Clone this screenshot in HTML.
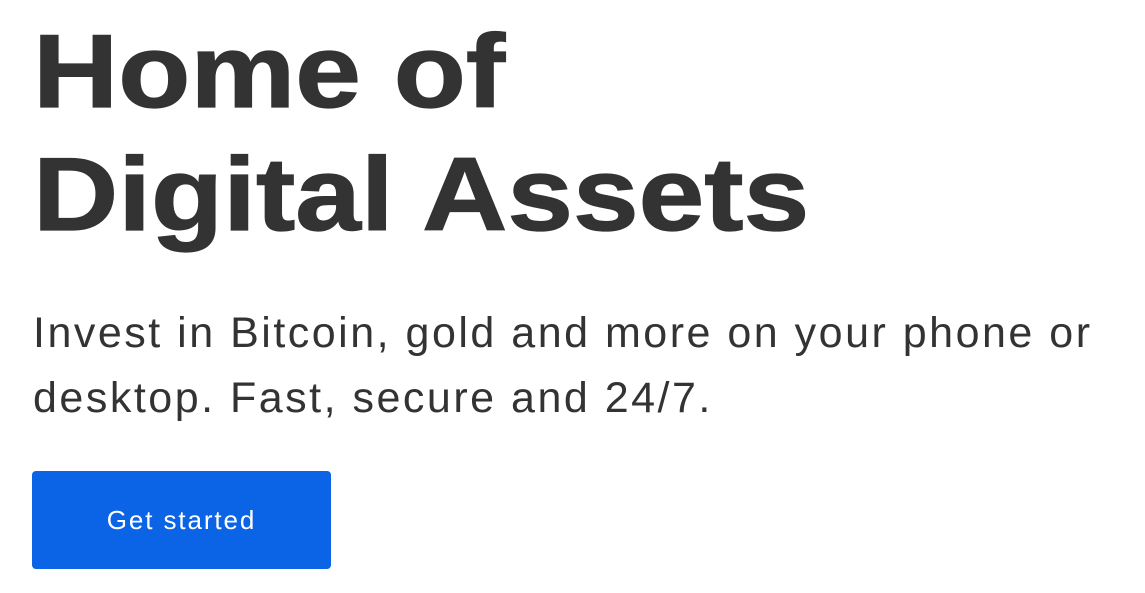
<!DOCTYPE html>
<html><head><meta charset="utf-8"><style>
html,body{margin:0;padding:0;background:#fff;width:1145px;height:593px;overflow:hidden}
body{font-family:"Liberation Sans",sans-serif;color:#333}
h1{position:absolute;left:33px;top:11px;margin:0;font-size:104px;line-height:123px;font-weight:bold;color:#333;letter-spacing:0;transform:scaleX(1.135);transform-origin:0 0;white-space:nowrap;-webkit-text-stroke:1.2px #333}
p{position:absolute;left:33px;top:301px;margin:0;font-size:43px;line-height:65px;color:#333;letter-spacing:2.5px;white-space:nowrap}
.btn{position:absolute;left:32px;top:471px;width:299px;height:98px;background:#0b63e5;border-radius:4px;color:#fff;font-size:26px;line-height:98px;text-align:center;letter-spacing:1.9px}
</style></head><body>
<h1>Home of<br>Digital Assets</h1>
<p>Invest in Bitcoin, gold and more on your phone or<br>desktop. Fast, secure and 24/7.</p>
<div class="btn">Get started</div>
</body></html>
